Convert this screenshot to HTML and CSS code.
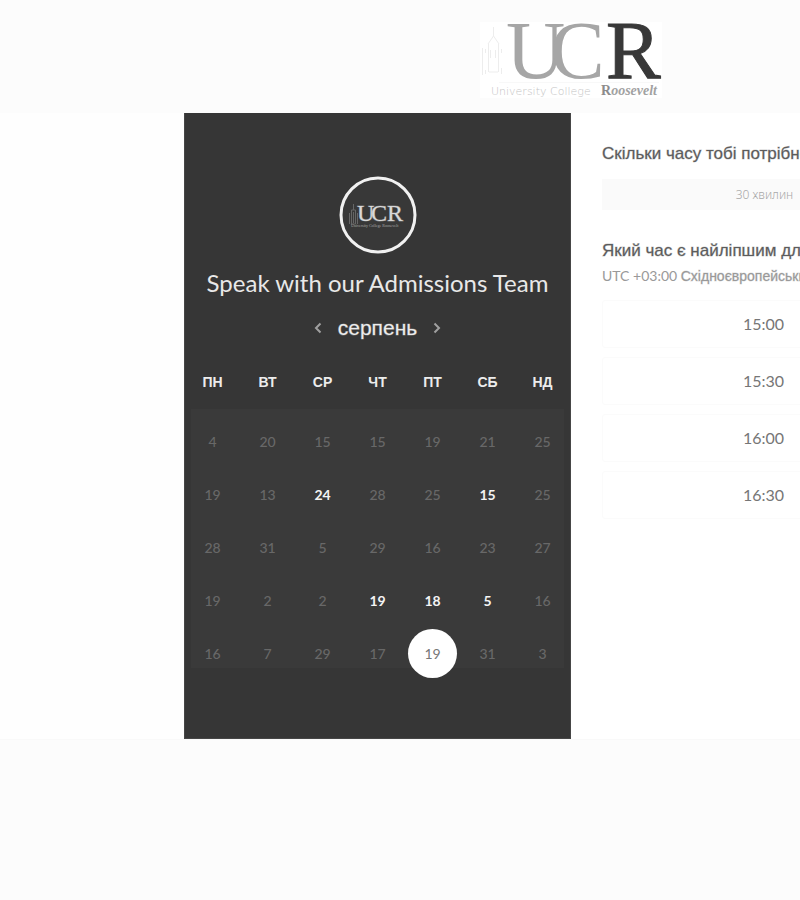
FILE: index.html
```html
<!DOCTYPE html>
<html lang="uk">
<head>
<meta charset="utf-8">
<meta name="viewport" content="width=device-width">
<title>UCR</title>
<link rel="stylesheet" href="styles.css">
</head>
<body>
<div class="page">
  <header class="header">
    <svg class="logo" viewBox="0 0 182 76" role="img" aria-label="University College Roosevelt">
      <rect width="182" height="76" fill="#fff"/>
      <g fill="none" stroke="#ededed">
        <path d="M13.500 5v9M8 22l5.500-8 5.500 8M8.500 22v28M18.500 22v28M2.500 26v27M5.500 27v4M5.500 48v4M10.500 28v8M15.500 28v8M21.500 27v4M21.500 46v6M9 50h9"/>
        <path d="M19 60.500h160" stroke="#f8f8f8"/>
      </g>
      <text class="logo-letter" x="26" y="56">U</text>
      <text class="logo-letter" x="70" y="56">C</text>
      <text class="logo-letter logo-dark" x="126" y="56">R</text>
      <text class="logo-name" x="11" y="73">University College</text>
      <text class="logo-last" x="121" y="73">R<tspan class="logo-slant">oosevelt</tspan></text>
    </svg>
  </header>
  <main class="stage">
    <section class="calendar">
      <svg class="badge" viewBox="0 0 78 78" role="img" aria-label="UCR">
        <circle cx="39" cy="39" r="37" fill="#383838" stroke="#f1f1f1" stroke-width="3"/>
        <path d="M14.500 28v6M12.500 34h4v14h-4zM10.500 37v11M18.500 37v11M14.500 36v11" fill="none" stroke="#666"/>
        <text class="badge-letter" x="18" y="45">U</text>
        <text class="badge-letter" x="32" y="45">C</text>
        <text class="badge-letter" x="48" y="45">R</text>
        <text class="badge-name" x="12" y="51">University College Roosevelt</text>
      </svg>
      <h1 class="title">Speak with our Admissions Team</h1>
      <div class="month">
        <button class="arrow" type="button" aria-label="‹"><svg viewBox="0 0 8 12"><path d="M6.500 1.500L2 6l4.500 4.500"/></svg></button>
        <h2 class="month-name">серпень</h2>
        <button class="arrow" type="button" aria-label="›"><svg viewBox="0 0 8 12"><path d="M1.500 1.500L6 6l-4.500 4.500"/></svg></button>
      </div>
      <table class="days">
        <thead><tr><th>ПН</th><th>ВТ</th><th>СР</th><th>ЧТ</th><th>ПТ</th><th>СБ</th><th>НД</th></tr></thead>
        <tbody>
          <tr><td>4</td><td>20</td><td>15</td><td>15</td><td>19</td><td>21</td><td>25</td></tr>
          <tr><td>19</td><td>13</td><td><button class="day" type="button">24</button></td><td>28</td><td>25</td><td><button class="day" type="button">15</button></td><td>25</td></tr>
          <tr><td>28</td><td>31</td><td>5</td><td>29</td><td>16</td><td>23</td><td>27</td></tr>
          <tr><td>19</td><td>2</td><td>2</td><td><button class="day" type="button">19</button></td><td><button class="day" type="button">18</button></td><td><button class="day" type="button">5</button></td><td>16</td></tr>
          <tr><td>16</td><td>7</td><td>29</td><td>17</td><td><button class="day selected" type="button" aria-pressed="true">19</button></td><td>31</td><td>3</td></tr>
        </tbody>
      </table>
    </section>
    <section class="times">
      <h2 class="question">Скільки часу тобі потрібно?</h2>
      <button class="duration" type="button">30 хвилин</button>
      <h2 class="question">Який час є найліпшим для</h2>
      <p class="zone">UTC +03:00 <b>Східноєвропейський</b></p>
      <div class="slots">
        <button class="slot" type="button">15:00</button>
        <button class="slot" type="button">15:30</button>
        <button class="slot" type="button">16:00</button>
        <button class="slot" type="button">16:30</button>
      </div>
    </section>
  </main>
</div>
</body>
</html>
```
FILE: styles.css
```css
* { box-sizing: border-box; }

body {
  margin: 0;
  background: #fcfcfc;
  color: #5c5c5c;
  font-family: Lato, "Liberation Sans", sans-serif;
  overflow-x: hidden;
}

button {
  margin: 0;
  padding: 0;
  border: 0;
  background: none;
  color: inherit;
  font: inherit;
}

h1, h2, p { margin: 0; }

.page { min-width: 1142px; }

.header {
  display: flex;
  justify-content: center;
  padding: 22px 0 15px;
}

.logo { width: 182px; height: 76px; overflow: visible; }
.logo-letter { font: 82px "Liberation Serif", serif; fill: #a6a6a6; }
.logo-dark { fill: #383838; stroke: #383838; }
.logo-name { font: 200 11px "DejaVu Sans", sans-serif; fill: #c4c4c4; }
.logo-last { font: bold 14px "Liberation Serif", serif; fill: #8c8c8c; }
.logo-slant { font-style: italic; fill: #a2a2a2; }

.stage {
  display: grid;
  grid-template-columns: 387px 387px;
  justify-content: center;
  background: linear-gradient(90deg, #fefefe 50%, #fff 50%);
  border-bottom: 1px solid #f9f9f9;
}

.calendar {
  display: flex;
  flex-direction: column;
  align-items: center;
  padding: 63px 0 58px;
  background: #363636;
  border: 1px solid #464646;
  border-top: 0;
}

.badge { width: 78px; height: 78px; }
.badge-letter { font: 24px "Liberation Serif", serif; fill: #d8d8d8; stroke: #d8d8d860; }
.badge-name { font: 4px "Liberation Serif", serif; fill: #aaa; }

.title {
  margin-top: 13px;
  color: #e8e8e8;
  font-size: 24px;
  font-weight: 400;
  line-height: 32px;
  white-space: nowrap;
}

.month {
  display: flex;
  align-items: center;
  gap: 16px;
  height: 28px;
  margin-top: 15px;
}

.month-name {
  color: #ececec;
  font: 21px/28px "Liberation Sans", sans-serif;
  -webkit-text-stroke: 1px #ececec50;
}

.arrow { display: flex; }
.arrow svg { width: 8px; height: 12px; }
.arrow path { fill: none; stroke: #a0a0a0; stroke-width: 2; }

.days {
  width: 100%;
  margin-top: 13px;
  border-collapse: collapse;
  table-layout: fixed;
  color: #686868;
  font-size: 14px;
  font-weight: 500;
  text-align: center;
  background: linear-gradient(#3a3a3a, #3a3a3a) 6px 54px / calc(100% - 12px) 259px no-repeat;
}

.days th {
  height: 60px;
  padding: 0 0 6px;
  color: #ececec;
  font: bold 14px "Liberation Sans", sans-serif;
}

.days td { height: 53px; padding: 0; }

.day {
  width: 49px;
  height: 49px;
  border-radius: 50%;
  color: #f4f4f4;
  font-weight: 700;
}

.selected {
  background: #fff;
  color: #777;
  font-weight: 400;
}

.times { padding: 30px 31px; }

.question {
  color: #5c5c5c;
  font: 17px/22px "Liberation Sans", sans-serif;
  -webkit-text-stroke: 1px #5c5c5c50;
  white-space: nowrap;
}

.duration {
  display: block;
  width: 100%;
  height: 31px;
  margin: 14px 0 30px;
  background: #fafafa;
  color: #a8a8a8;
  font-family: "Noto Sans", sans-serif;
  font-weight: 300;
  font-size: 12px;
}

.zone {
  margin-top: 4px;
  color: #999;
  font-size: 14px;
  line-height: 20px;
  white-space: nowrap;
}

.zone b {
  font: 14px "Liberation Sans", sans-serif;
  -webkit-text-stroke: 1px #99999950;
}

.slots {
  display: grid;
  gap: 9px;
  margin-top: 14px;
}

.slot {
  height: 48px;
  padding: 0 2px 2px 0;
  border: 1px solid #fbfbfb;
  border-radius: 3px;
  color: #767676;
  font-size: 16px;
}
```
